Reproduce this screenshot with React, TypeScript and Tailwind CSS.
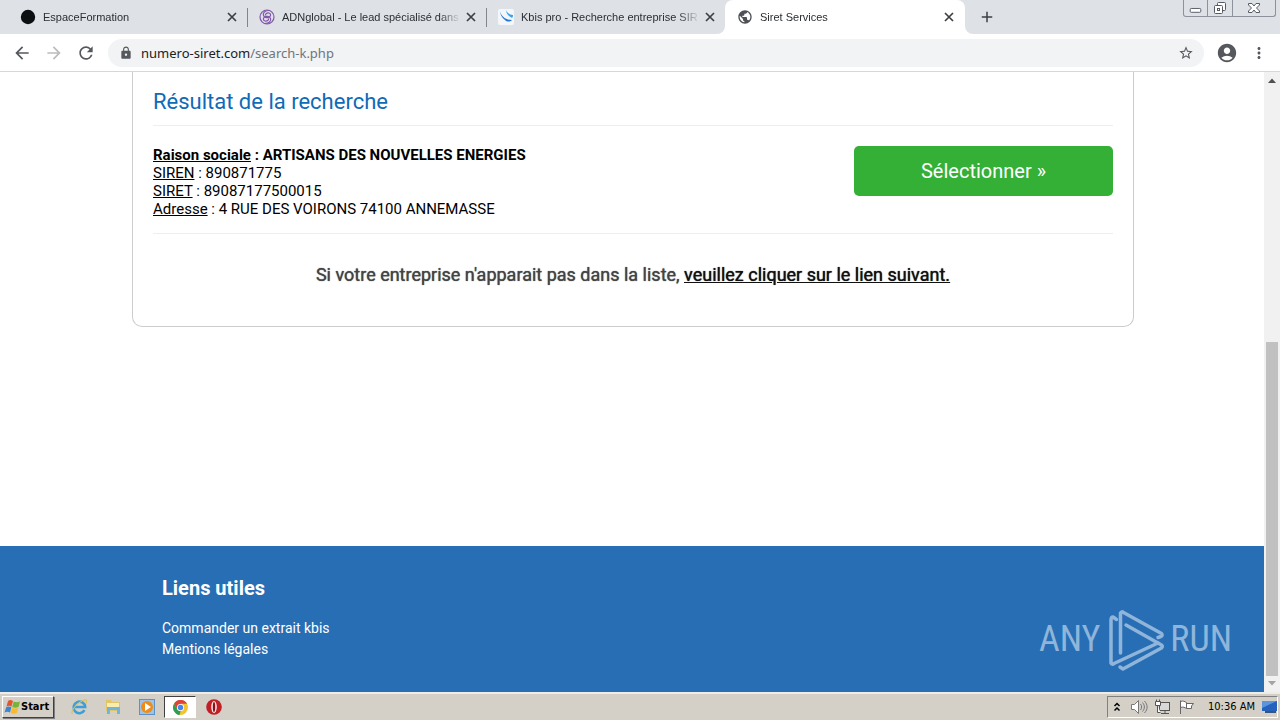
import type { ReactNode } from "react";
import {
  MdAccountCircle,
  MdAdd,
  MdArrowBack,
  MdArrowForward,
  MdLock,
  MdMoreVert,
  MdPublic,
  MdRefresh,
  MdStarBorder,
} from "react-icons/md";

const tabFont = "font-['Liberation_Sans',Arial,sans-serif]";
const taskbarFont = "font-['DejaVu_Sans_Condensed','DejaVu_Sans',sans-serif]";

function Tab({ icon, title, active = false, separator = false }: { icon: ReactNode; title: string; active?: boolean; separator?: boolean }) {
  return (
    <div
      className={
        active
          ? "relative flex h-full w-[240px] min-w-0 items-center rounded-t-lg bg-white pl-3 pr-2"
          : "relative flex h-full w-[239px] min-w-0 items-center pl-3 pr-[7px]"
      }
    >
      {active && (
        <>
          <span className="absolute -left-2 bottom-0 size-2 bg-white"><span className="block size-2 rounded-br-lg bg-[#dee1e6]" /></span>
          <span className="absolute -right-2 bottom-0 size-2 bg-white"><span className="block size-2 rounded-bl-lg bg-[#dee1e6]" /></span>
        </>
      )}
      {icon}
      <span className="ml-[7px] min-w-0 flex-1 overflow-hidden whitespace-nowrap text-[11px] leading-4 text-[#2b2e32] [mask-image:linear-gradient(to_right,#000_88%,transparent)]">
        {title}
      </span>
      <button aria-label={"Fermer " + title} className="ml-0.5 flex size-4 items-center justify-center text-[#3c4043]">
        <svg viewBox="0 0 10 10" className="size-2.5" fill="none" stroke="currentColor" strokeWidth="1.7"><path d="m1 1 8 8M9 1 1 9" /></svg>
      </button>
      {separator && <span className="absolute -right-px top-2 h-[19px] w-px bg-[#80868b]" />}
    </div>
  );
}

function WindowControls() {
  const line = { fill: "#fff", stroke: "#555b66", strokeWidth: 1 };
  return (
    <div className="ml-auto mr-1 flex h-[17px] self-start rounded-b-[3px] border border-t-0 border-[#8c919b]">
      <button aria-label="Réduire" className="w-6 border-r border-[#8c919b]">
        <svg viewBox="0 0 24 16" className="h-4 w-full"><rect x="6.5" y="8.5" width="11" height="4" rx="1" {...line} /></svg>
      </button>
      <button aria-label="Restaurer" className="w-[25px] border-r border-[#8c919b]">
        <svg viewBox="0 0 24 16" className="h-4 w-full">
          <rect x="9.5" y="2.5" width="8" height="8" rx="1" {...line} />
          <rect x="6.5" y="5.5" width="8" height="8" rx="1" {...line} />
          <rect x="9.5" y="8.5" width="2" height="2" {...line} />
        </svg>
      </button>
      <button aria-label="Fermer" className="w-[42px]">
        <svg viewBox="0 0 42 16" className="h-4 w-full">
          <path d="M15.500 3.500h3.500l2 2.500 2-2.500h3.500v1.500l-3 3 3 3v1.500h-3.500l-2-2.500-2 2.500h-3.500v-1.500l3-3-3-3z" {...line} />
        </svg>
      </button>
    </div>
  );
}

function ChromeBar() {
  return (
    <header className={tabFont}>
      <div className="flex h-[34px] items-center bg-[#dee1e6] pl-2">
        <Tab title="EspaceFormation" separator icon={
          <svg viewBox="0 0 16 16" className="size-4 shrink-0"><circle cx="8" cy="8" r="7.2" fill="#0b0f12" /></svg>
        } />
        <Tab title="ADNglobal - Le lead spécialisé dans l" separator icon={
          <svg viewBox="0 0 16 16" className="size-4 shrink-0" fill="none" stroke="#8257ad" strokeWidth="1.2">
            <circle cx="8" cy="8" r="7" />
            <path d="M10 1.500C6 1.500 3.500 4 4.500 6.500S9 9 10.500 8s1.500-3.500-.5-4-4 1-3.500 2.500M6 14.500c4 0 6.500-2.500 5.500-5S7 7 5.500 8 4 11.500 6 12s4-1 3.500-2.500" />
          </svg>
        } />
        <Tab title="Kbis pro - Recherche entreprise SIR" icon={
          <svg viewBox="0 0 16 16" className="size-4 shrink-0">
            <rect width="16" height="16" rx="2" fill="#f4f7fa" />
            <path d="M2 2c1 5 5 9 12 9-2 2-5 2-7 0C4 9 2 5 2 2z" fill="#2875d8" />
            <path d="M8 1c0 3 2 6 6 8 1-1 1-2 1-3-3 0-6-2-7-5z" fill="#3da2e8" />
          </svg>
        } />
        <Tab title="Siret Services" active icon={<MdPublic className="size-4 shrink-0 text-[#4d5156]" />} />
        <button aria-label="Nouvel onglet" className="ml-3 flex size-5 items-center justify-center text-[#3c4043]"><MdAdd className="size-[18px]" /></button>
        <WindowControls />
      </div>
      <div className="flex h-[38px] items-center border-b border-[#d5d7da] bg-white pl-3 pr-3 text-[#55585d]">
        <button aria-label="Précédent" className="mr-3"><MdArrowBack className="size-5" /></button>
        <button aria-label="Suivant" className="mr-3 text-[#babcbe]"><MdArrowForward className="size-5" /></button>
        <button aria-label="Actualiser" className="mr-3"><MdRefresh className="size-5" /></button>
        <div className="flex h-7 min-w-0 flex-1 items-center rounded-full bg-[#f1f3f4] pl-[11px] pr-2.5">
          <MdLock className="size-3.5 shrink-0" />
          <label className="relative ml-2 flex min-w-0 flex-1 items-center font-['Noto_Sans',sans-serif] text-[13px] leading-5">
            <span className="pointer-events-none absolute left-0 text-[#202124]">numero-siret.com<span className="text-[#70757a]">/search-k.php</span></span>
            <input aria-label="Adresse du site" className="w-full bg-transparent outline-none" />
          </label>
          <button aria-label="Ajouter aux favoris"><MdStarBorder className="size-4" /></button>
        </div>
        <button aria-label="Profil" className="ml-3"><MdAccountCircle className="size-[22px]" /></button>
        <button aria-label="Menu" className="ml-3"><MdMoreVert className="size-[18px]" /></button>
      </div>
    </header>
  );
}

function AnyRunMark() {
  return (
    <div className="flex items-center font-['Roboto_Condensed','Liberation_Sans_Narrow',sans-serif] text-[36px] leading-[60px] text-[#8fb5db]">
      <span>ANY</span>
      <svg viewBox="0 0 60 66" className="ml-1.5 mr-1 h-[66px] w-[60px]" fill="none" stroke="#8fb5db" strokeWidth="3.5" strokeLinecap="round" strokeLinejoin="round">
        <path d="M10.500 13.500 7 11Q5 11 5 14v43q1 2 3 .5L52 37" />
        <path d="M14.500 47V7q1-2 3-.5l38 21q1.500 2-.5 3l-3 1" />
        <path d="m20 19 35.500 20q1.500 1.500 0 3L17 63l-3-2" />
      </svg>
      <span>RUN</span>
    </div>
  );
}

function Scrollbar() {
  return (
    <div className="flex w-4 shrink-0 flex-col bg-[#f1f1f1] px-0.5" aria-hidden="true">
      <svg viewBox="0 0 12 17" className="h-[17px] w-3"><path d="M2 11h8L6 6.500z" fill="#505050" /></svg>
      <div className="flex-[253]" />
      <div className="flex-[334] bg-[#c1c1c1]" />
      <svg viewBox="0 0 12 16" className="h-4 w-3"><path d="M2 5h8L6 9.500z" fill="#a3a3a3" /></svg>
    </div>
  );
}

function ResultCard() {
  return (
    <section className="mx-auto max-w-[1002px] rounded-b-[10px] border border-t-0 border-[#ccc] px-5 pb-[39px]">
      <h1 className="border-b border-[#eee] pb-[9px] pt-4 text-[22px] leading-7 text-[#0f6ab8]">Résultat de la recherche</h1>
      <div className="flex items-start justify-between border-b border-[#eee] pb-[15px] pt-5 text-black">
        <div className="text-[15px] leading-[18px]">
          <p className="font-bold"><u>Raison sociale</u> : ARTISANS DES NOUVELLES ENERGIES</p>
          <p><u>SIREN</u> : 890871775</p>
          <p><u>SIRET</u> : 89087177500015</p>
          <p><u>Adresse</u> : 4 RUE DES VOIRONS 74100 ANNEMASSE</p>
        </div>
        <button className="h-[50px] w-[259px] rounded-[5px] bg-[#33b035] text-xl text-white">Sélectionner »</button>
      </div>
      <p className="pt-[29px] text-center text-lg leading-6 text-[#444] [text-shadow:0_0_1px_currentColor]">
        Si votre entreprise n'apparait pas dans la liste, <a href="#lien" className="text-[#111] underline">veuillez cliquer sur le lien suivant.</a>
      </p>
    </section>
  );
}

function ChromeLogo() {
  return (
    <svg viewBox="0 0 16 16" className="size-[15px]">
      <circle cx="8" cy="8" r="8" fill="#f4c430" />
      <path d="M1.100 4A8 8 0 0 1 15 4H8L4.500 10z" fill="#dc4437" />
      <path d="M1.100 4 4.600 10 8 12 7 16A8 8 0 0 1 1.100 4z" fill="#2f9e55" />
      <circle cx="8" cy="8" r="3.8" fill="#fff" />
      <circle cx="8" cy="8" r="2.9" fill="#4285f4" />
    </svg>
  );
}

function Taskbar() {
  return (
    <footer className={"flex h-7 shrink-0 items-center border-t-2 border-[#eeece7] bg-[#d4d0c8] pl-0.5 text-[11px] text-black " + taskbarFont}>
      <button className="flex h-[22px] w-[52px] items-center border border-b-[#404040] border-l-white border-r-[#404040] border-t-white pl-px font-bold shadow-[1px_1px_0_#808080]">
        <svg viewBox="0 0 16 16" className="mr-px size-4 shrink-0">
          <path d="M4 2c2-1.500 3-1 5 0L7.500 7.500C5.500 6.500 4.500 6.500 2.500 7.500z" fill="#e8552d" />
          <path d="M9.700 2.500c2 1 4 1 6.300 0L14.500 8c-2 1-4 1-6.300 0z" fill="#75b33b" />
          <path d="M2.200 8.300c2-1 3.200-1 5.200 0l-1.400 5.200c-2-1-3.500-1-5.500 0z" fill="#3f84d0" />
          <path d="M8 8.800c2 1 4 1 6.300 0l-1.600 5.200c-2 1-4 1-6 0z" fill="#f6bc2e" />
        </svg>
        Start
      </button>
      <button aria-label="Internet Explorer" className="ml-4 flex w-[18px] justify-center">
        <svg viewBox="0 0 18 18" className="size-[18px]" fill="none">
          <path d="M14.500 12.200a5.800 5.800 0 1 1 .7-3.200H5" stroke="#3d9fd9" strokeWidth="2.6" />
          <path d="M2.500 16C0 14 7 4 14.500 2c2.500-.5 2.500 1.500 1.500 3.500" stroke="#d9c05c" strokeWidth="1.1" />
        </svg>
      </button>
      <button aria-label="Explorateur" className="ml-4 flex w-[18px] justify-center">
        <svg viewBox="0 0 18 18" className="size-[18px]">
          <path d="M2 2h5l1 2h8v9H2z" fill="#e3c568" /><path d="M3 5h12v5H3z" fill="#f8edae" />
          <path d="M3 16V9h13v7h-3v-4H6v4z" fill="#6fb6dc" />
        </svg>
      </button>
      <button aria-label="Lecteur multimédia" className="ml-4 flex w-[18px] justify-center">
        <svg viewBox="0 0 18 18" className="size-[18px]">
          <rect x="1.5" y="1.5" width="15" height="15" fill="#9fc3e4" stroke="#5b92c7" />
          <circle cx="9" cy="9" r="6" fill="#ef8b18" /><path d="m7 5 6 4-6 4z" fill="#fff" />
        </svg>
      </button>
      <button aria-label="Google Chrome" className="ml-2 flex h-[22px] w-8 items-center justify-center border border-b-white border-l-[#404040] border-r-white border-t-[#404040] bg-white"><ChromeLogo /></button>
      <button aria-label="Opera" className="ml-2.5 flex w-4 justify-center">
        <svg viewBox="0 0 16 16" className="size-4"><circle cx="8" cy="8" r="7.8" fill="#c01f26" /><ellipse cx="8" cy="8" rx="2.8" ry="6" fill="#f7e8e6" /><ellipse cx="8" cy="8" rx="1.2" ry="5" fill="#8c1116" /></svg>
      </button>
      <div className="ml-auto mr-0.5 flex h-[22px] items-center border border-b-white border-l-[#808080] border-r-white border-t-[#808080] pl-1">
        <svg viewBox="0 0 10 12" className="h-3 w-2.5" fill="none" stroke="#000" strokeWidth="1.5"><path d="M2.500 5 5 2.500 7.500 5M2.500 9.500 5 7l2.500 2.500" /></svg>
        <svg viewBox="0 0 18 16" className="ml-2 h-4 w-[18px]" fill="#fff" stroke="#777" strokeWidth="1"><path d="M1.500 5.500h3l4-4v13l-4-4h-3z" /><path d="M10.500 5c1.500 2 1.500 4 0 6M12.500 3.500c2.500 3 2.500 6 0 9M14.500 2c3.500 4 3.500 8 0 12" fill="none" /></svg>
        <svg viewBox="0 0 18 16" className="ml-1.5 h-4 w-[18px]" fill="#fff" stroke="#555" strokeWidth="1"><rect x="5.5" y="3.5" width="10" height="8" fill="#d8d8d8" /><path d="M7 14.500h8M11 11.500v3M1.500 2.500h5v4h-5zM2.500 .5v2M5.500 .5v2M3.500 6.500v7h3" /></svg>
        <svg viewBox="0 0 18 16" className="ml-1.5 h-4 w-[18px]" fill="#fff" stroke="#666" strokeWidth="1"><path d="M2.500 15V1.500M2.500 2.500c3-1 4 0 6 1v6c-2-1-3-2-6-1zM8.500 4.500h7l-2 2.500v2.500h-5" /></svg>
        <span className="ml-3 whitespace-nowrap">10:36 AM</span>
        <svg viewBox="0 0 16 16" className="ml-1.5 size-4"><path d="M1 2h15v10H1z" fill="#2462bd" /><path d="M1 2h15L1 9z" fill="#5b96dd" /><path d="M4 12h11v2H4z" fill="#34557d" /></svg>
      </div>
    </footer>
  );
}

export default function App() {
  return (
    <div className="flex h-screen flex-col overflow-hidden bg-white">
      <ChromeBar />
      <div className="flex min-h-0 flex-1">
        <div className="flex min-w-0 flex-1 flex-col font-['Roboto',sans-serif]">
          <main className="flex-1 pl-0.5">
            <ResultCard />
          </main>
          <div className="flex items-end justify-between bg-[#286eb4] pb-5 pl-[162px] pr-8 pt-7 text-white">
            <nav aria-labelledby="links" className="pb-3">
              <h2 id="links" className="mb-4 text-xl font-bold leading-7">Liens utiles</h2>
              <ul className="text-sm leading-[21px]">
                <li><a href="#kbis">Commander un extrait kbis</a></li>
                <li><a href="#mentions">Mentions légales</a></li>
              </ul>
            </nav>
            <AnyRunMark />
          </div>
        </div>
        <Scrollbar />
      </div>
      <Taskbar />
    </div>
  );
}
